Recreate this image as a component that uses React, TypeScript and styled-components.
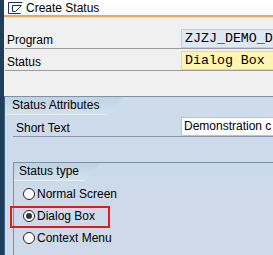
import styled, { createGlobalStyle } from 'styled-components';

const GlobalStyle = createGlobalStyle`
  html, body {
    margin: 0;
    padding: 0;
    background: #f0f0f0;
  }
  body {
    font-family: "Liberation Sans", Arial, sans-serif;
    font-size: 12px;
    color: #000;
  }
`;

const Frame = styled.div`
  display: flex;
  width: 273px;
  height: 255px;
  overflow: hidden;
`;

const Edge = styled.div`
  width: 4px;
  flex-shrink: 0;
  background: #1f3e5a;
`;

const Main = styled.div`
  flex: 1;
  display: flex;
  flex-direction: column;
  min-width: 0;
  background: #f0f0f0;
`;

const TitleBar = styled.div`
  display: flex;
  align-items: center;
  gap: 2px;
  height: 15px;
  padding-left: 4px;
  background: linear-gradient(#ffffff, #fbfbfb);
  border-bottom: 2px solid #e4a95a;
  box-shadow: 0 1px 0 #f6dcb4;
  font-size: 12px;
  white-space: nowrap;
`;

const Header = styled.div`
  display: flex;
  flex-direction: column;
  padding-top: 10px;
`;

const FieldRow = styled.div<{ $indent?: number; $line?: string }>`
  display: flex;
  align-items: flex-end;
  height: 21px;
  margin-left: ${p => p.$indent ?? 1}px;
  border-bottom: 1px solid ${p => p.$line ?? '#9c9c9c'};
`;

const Label = styled.div<{ $width: number; $pad?: number }>`
  width: ${p => p.$width}px;
  flex-shrink: 0;
  padding-left: ${p => p.$pad ?? 2}px;
  box-sizing: border-box;
  line-height: 14px;
  padding-bottom: 1px;
  white-space: nowrap;
`;

const tones = {
  blue: { bg: '#dfe8f5', border: '#c3cfdd' },
  yellow: { bg: '#fff5b2', border: '#e6dc8e' },
  white: { bg: '#ffffff', border: '#b8c4d2' },
};

// fields run past the right edge of the window, as in the dialog
const Input = styled.div<{ $tone: keyof typeof tones; $mono?: boolean }>`
  flex: 1;
  min-width: 0;
  height: 19px;
  box-sizing: border-box;
  padding-left: ${p => (p.$mono ? 3 : 2)}px;
  background: ${p => tones[p.$tone].bg};
  border: 1px solid ${p => tones[p.$tone].border};
  border-right: none;
  font-family: ${p => (p.$mono ? '"Liberation Mono", "Courier New", monospace' : 'inherit')};
  font-size: ${p => (p.$mono ? '13.3px' : '12px')};
  line-height: 17px;
  white-space: nowrap;
  overflow: hidden;
`;

const Panel = styled.div`
  flex: 1;
  margin-top: 25px;
  display: flex;
  flex-direction: column;
  background: #cedbeb;
  border-top: 1px solid #7d92aa;
  border-left: 1px solid #3f6284;
`;

const TabHead = styled.div<{ $width: number; $pad: number }>`
  width: ${p => p.$width}px;
  height: 18px;
  padding-left: ${p => p.$pad}px;
  box-sizing: border-box;
  line-height: 17px;
  background: linear-gradient(#bfd3e3, #d2e0ec);
  border-bottom: 1px solid #e6eef6;
  clip-path: polygon(0 0, 100% 0, calc(100% - 17px) 100%, 0 100%);
  white-space: nowrap;
`;

const Group = styled.div`
  flex: 1;
  margin: 25px 0 0 8px;
  background: linear-gradient(#c6dbeb, #cedaea 30px);
  border-top: 1px solid #7a90a8;
  border-left: 1px solid #7a90a8;
  display: flex;
  flex-direction: column;
`;

const RadioList = styled.div`
  display: flex;
  flex-direction: column;
  padding-top: 2px;
`;

const RadioRow = styled.div`
  position: relative;
  display: flex;
  align-items: center;
  gap: 2px;
  height: 22px;
  padding-left: 9px;
  white-space: nowrap;
`;

const Circle = styled.span<{ $on?: boolean }>`
  width: 12px;
  height: 12px;
  box-sizing: border-box;
  border-radius: 50%;
  border: 1px solid #222;
  background: #fff;
  display: flex;
  align-items: center;
  justify-content: center;
  &::after {
    content: '';
    display: ${p => (p.$on ? 'block' : 'none')};
    width: 6px;
    height: 6px;
    border-radius: 50%;
    background: #333;
  }
`;

const Highlight = styled.span`
  position: absolute;
  left: -4px;
  top: 1px;
  width: 100px;
  height: 22px;
  box-sizing: border-box;
  border: 2px solid #e21b1b;
  pointer-events: none;
`;

function CreateIcon() {
  return (
    <svg width="16" height="12" viewBox="0 0 16 12" fill="none" stroke="#1d3550" strokeWidth="1">
      <path d="M14.5 0.5 H0.5 V11.5 H12.5" />
      <path d="M4.5 3.5 H13.5 L7.5 9.5 H4.5 Z" />
    </svg>
  );
}

const statusTypes = [
  { label: 'Normal Screen', on: false },
  { label: 'Dialog Box', on: true },
  { label: 'Context Menu', on: false },
];

export default function App() {
  return (
    <>
      <GlobalStyle />
      <Frame>
        <Edge />
        <Main>
          <TitleBar>
            <CreateIcon />
            <span>Create Status</span>
          </TitleBar>
          <Header>
            <FieldRow>
              <Label $width={176}>Program</Label>
              <Input $tone="blue" $mono>ZJZJ_DEMO_D</Input>
            </FieldRow>
            <FieldRow>
              <Label $width={176}>Status</Label>
              <Input $tone="yellow" $mono>Dialog Box</Input>
            </FieldRow>
          </Header>
          <Panel>
            <TabHead $width={119} $pad={7}>Status Attributes</TabHead>
            <FieldRow $indent={8} $line="#8797ad">
              <Label $width={168} $pad={3}>Short Text</Label>
              <Input $tone="white">Demonstration c</Input>
            </FieldRow>
            <Group>
              <TabHead $width={87} $pad={5}>Status type</TabHead>
              <RadioList>
                {statusTypes.map(t => (
                  <RadioRow key={t.label}>
                    <Circle $on={t.on} />
                    <span>{t.label}</span>
                    {t.on && <Highlight />}
                  </RadioRow>
                ))}
              </RadioList>
            </Group>
          </Panel>
        </Main>
      </Frame>
    </>
  );
}
